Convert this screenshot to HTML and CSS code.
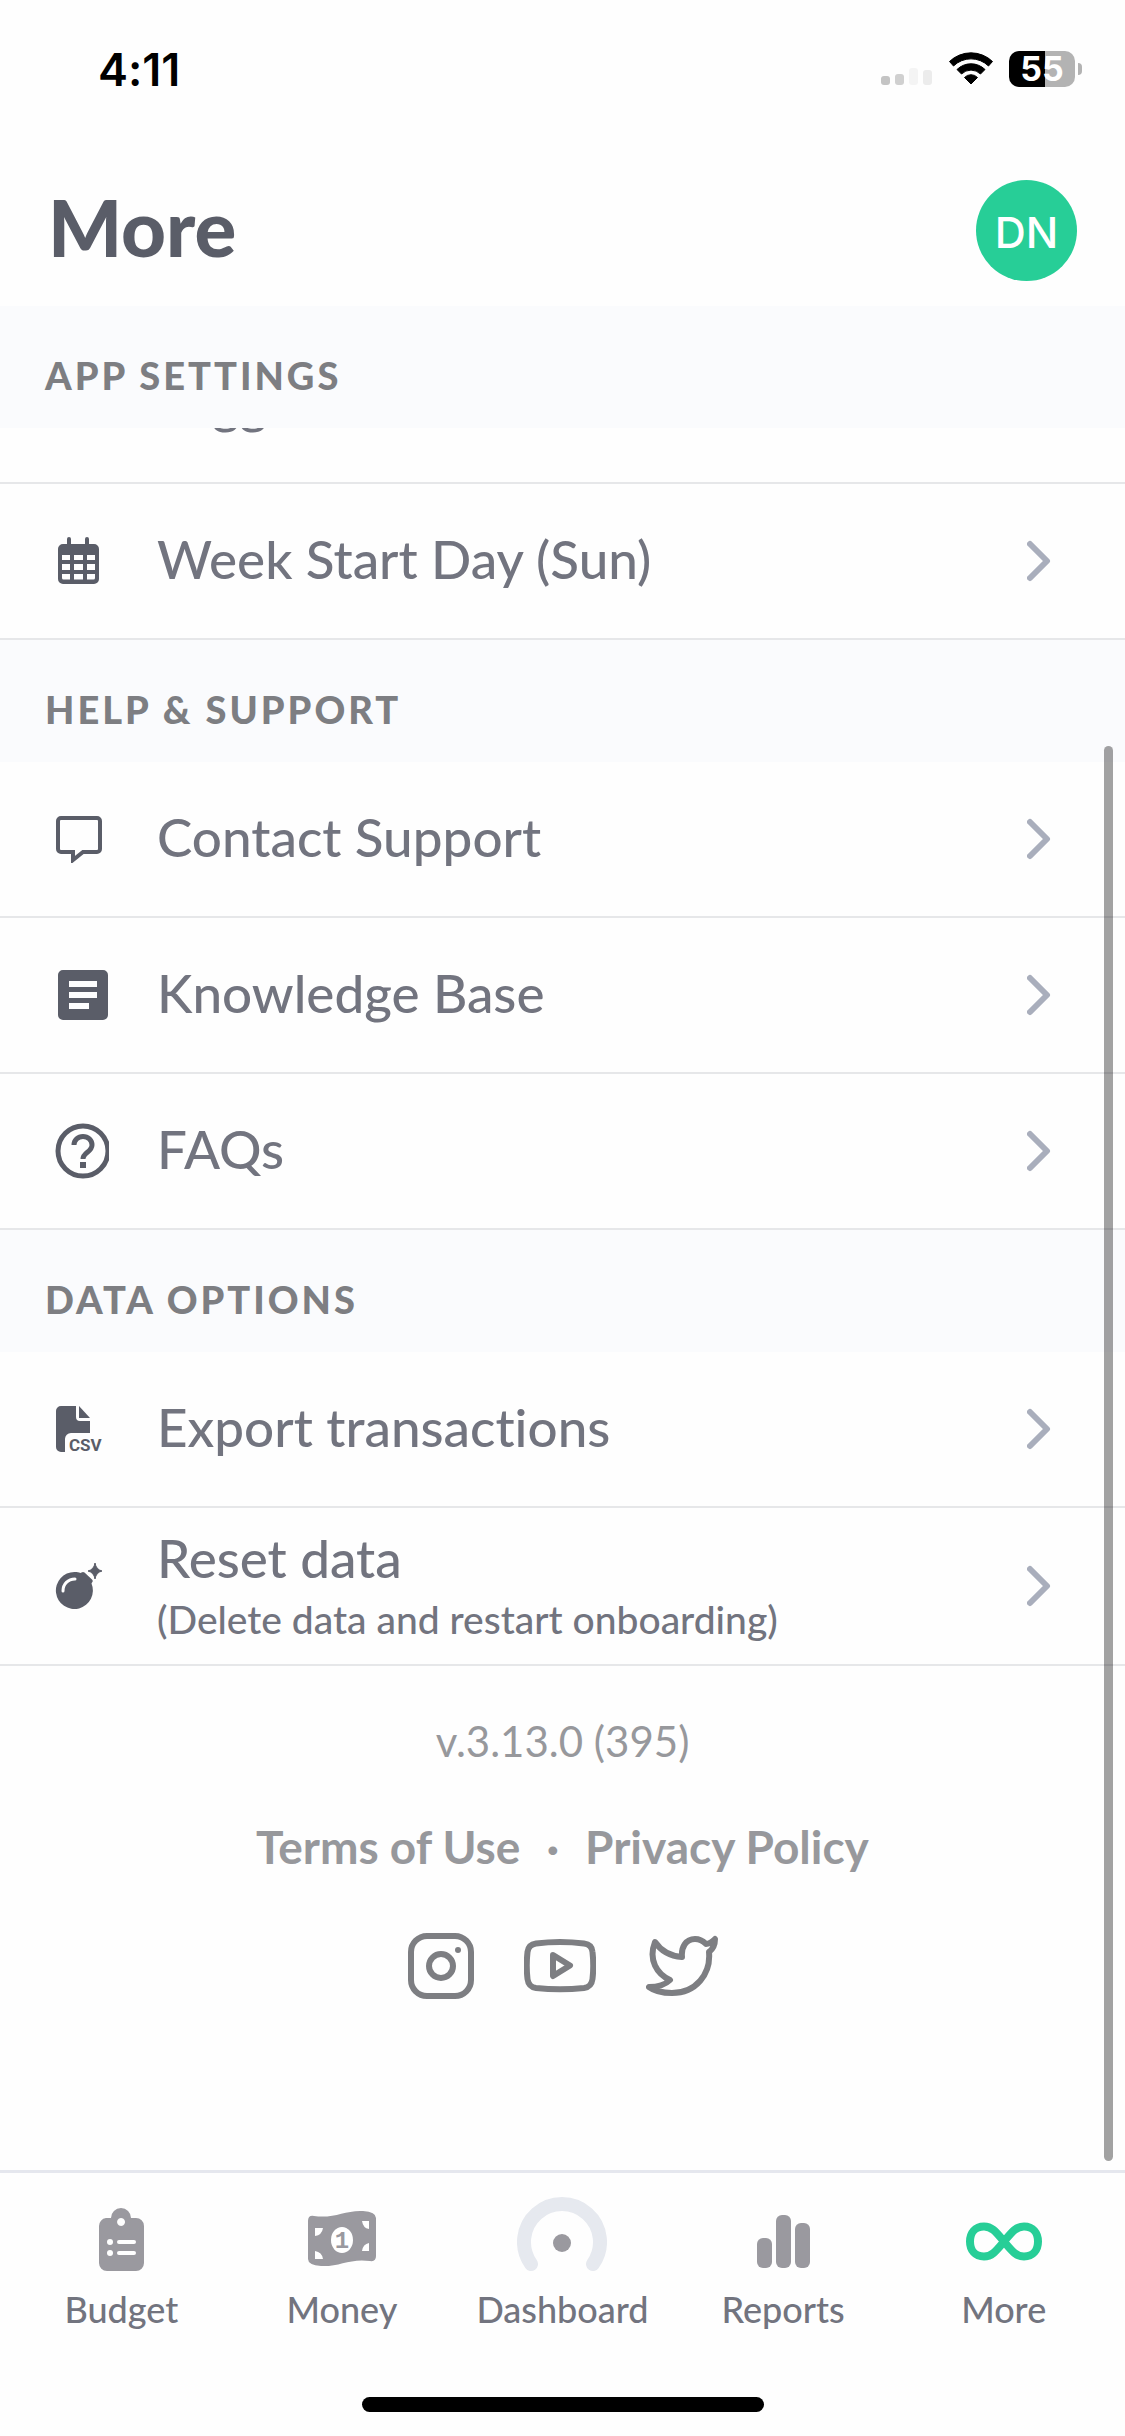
FILE: index.html
```html
<!DOCTYPE html>
<html lang="en">
<head>
  <meta charset="UTF-8">
  <meta name="viewport" content="width=device-width, initial-scale=1.0">
  <title>More</title>
  <link rel="stylesheet" href="styles.css">
</head>
<body>
  <div class="status-bar">
    <span class="time">4:11</span>
    <div class="status-icons">
      <svg class="signal" width="52" height="20" viewBox="0 0 52 20">
        <rect x="0" y="9" width="9" height="9" rx="3" fill="#c4c4c4"/>
        <rect x="14" y="7" width="9" height="11" rx="3" fill="#d0d0d0"/>
        <rect x="28" y="1" width="9" height="17" rx="3" fill="#f4f4f4"/>
        <rect x="42" y="3" width="9" height="15" rx="3" fill="#ececec"/>
      </svg>
      <svg width="46" height="34" viewBox="0 0 46 34">
        <path d="M1.500 9.500A31 31 0 0 1 44.500 9.500L40.500 14A25 25 0 0 0 5.500 14Z" stroke="#000" stroke-linejoin="round"/>
        <path d="M9 17.500A20 20 0 0 1 37 17.500L32.500 22A13.500 13.500 0 0 0 13.500 22Z" stroke="#000" stroke-linejoin="round"/>
        <path d="M16.500 25.500A9 9 0 0 1 29.500 25.500L23 32Z" stroke="#000" stroke-linejoin="round"/>
      </svg>
      <div class="battery"><span>55</span></div>
    </div>
  </div>

  <header class="header">
    <h1>More</h1>
    <button type="button" class="avatar">DN</button>
  </header>

  <main class="content">
    <h2 class="section-title">App Settings</h2>
    <div class="row-clip">
      <a href="#" class="row"><span class="icon"></span><span class="label">Toggle</span></a>
    </div>
    <a href="#" class="row">
      <span class="icon">
        <svg width="48" height="48" viewBox="0 0 48 48">
          <path fill-rule="evenodd" d="M12 2a2 2 0 0 1 4 0v5h14V2a2 2 0 0 1 4 0v5h5a5 5 0 0 1 5 5v30a5 5 0 0 1-5 5H8a5 5 0 0 1-5-5V12a5 5 0 0 1 5-5h4zM7 18v5h8v-5zM19 18v5h9v-5zM32 18v5h8v-5zM7 27v6h8v-6zM19 27v6h9v-6zM32 27v6h8v-6zM7 37v4q0 1.500 1.500 1.500H15V37zM19 37v5.500h9V37zM32 37v5.500h6.500q1.500 0 1.500-1.500v-4z"/>
        </svg>
      </span>
      <span class="label">Week Start Day (Sun)</span>
      <svg class="chevron" width="24" height="42" viewBox="0 0 24 42"><path d="M3 4l17 17L3 38"/></svg>
    </a>

    <h2 class="section-title">Help &amp; Support</h2>
    <a href="#" class="row">
      <span class="icon">
        <svg width="48" height="48" viewBox="0 0 48 48">
          <path class="line" stroke-width="4" d="M6 3h36a3 3 0 0 1 3 3v28a3 3 0 0 1-3 3H28l-10 8v-8H6a3 3 0 0 1-3-3V6a3 3 0 0 1 3-3z"/>
        </svg>
      </span>
      <span class="label">Contact Support</span>
      <svg class="chevron" width="24" height="42" viewBox="0 0 24 42"><path d="M3 4l17 17L3 38"/></svg>
    </a>
    <a href="#" class="row">
      <span class="icon">
        <svg width="54" height="54" viewBox="0 0 54 54">
          <path fill-rule="evenodd" d="M8 2h40a5 5 0 0 1 5 5v40a5 5 0 0 1-5 5H8a5 5 0 0 1-5-5V7a5 5 0 0 1 5-5zM14 13v6h28v-6zM14 24v6h28v-6zM14 35v6h20v-6z"/>
        </svg>
      </span>
      <span class="label">Knowledge Base</span>
      <svg class="chevron" width="24" height="42" viewBox="0 0 24 42"><path d="M3 4l17 17L3 38"/></svg>
    </a>
    <a href="#" class="row">
      <span class="icon">
        <svg width="54" height="56" viewBox="0 0 54 56">
          <circle class="line" stroke-width="5" cx="28" cy="28" r="25"/>
          <path class="line" stroke-width="5" d="M19 22c0-5 4-8.500 9-8.500s9 3.500 9 8.500c0 7-9 7.500-9 14"/>
          <rect x="25" y="39" width="6" height="6"/>
        </svg>
      </span>
      <span class="label">FAQs</span>
      <svg class="chevron" width="24" height="42" viewBox="0 0 24 42"><path d="M3 4l17 17L3 38"/></svg>
    </a>

    <h2 class="section-title">Data Options</h2>
    <a href="#" class="row">
      <span class="icon">
        <svg width="54" height="48" viewBox="0 0 54 48">
          <path d="M6 1h15v11a4 4 0 0 0 4 4h10v12H16a6 6 0 0 0-6 6v13H6a5 5 0 0 1-5-5V6a5 5 0 0 1 5-5z"/>
          <path d="M24 1l11 12H24z"/>
          <text class="csv" x="14" y="46">CSV</text>
        </svg>
      </span>
      <span class="label">Export transactions</span>
      <svg class="chevron" width="24" height="42" viewBox="0 0 24 42"><path d="M3 4l17 17L3 38"/></svg>
    </a>
    <a href="#" class="row row-tall">
      <span class="icon">
        <svg width="48" height="48" viewBox="0 0 48 48">
          <path d="M19.500 10c3 0 4 .3 6 1l1-.5q1.500-1 3 0l7.500 7q1.500 1.500 0 3l-.5 1A18.500 18.500 0 1 1 19.500 10z"/>
          <path d="M40 1q1 6.500 7 8-6 1.500-7 8-1-6.500-7-8 6-1.500 7-8z" stroke="#5a5d68" stroke-width="1" stroke-linejoin="round"/>
          <path d="M8 29c0-7 5-12 12-12" fill="none" stroke="#fff" stroke-width="3" stroke-linecap="round"/>
        </svg>
      </span>
      <span class="label">Reset data<small>(Delete data and restart onboarding)</small></span>
      <svg class="chevron" width="24" height="42" viewBox="0 0 24 42"><path d="M3 4l17 17L3 38"/></svg>
    </a>

    <footer class="footer">
      <p class="version">v.3.13.0 (395)</p>
      <p class="legal"><a href="#">Terms of Use</a><span>·</span><a href="#">Privacy Policy</a></p>
      <div class="social">
        <a href="#" aria-label="Instagram">
          <svg width="66" height="66" viewBox="0 0 66 66">
            <rect x="3" y="3" width="60" height="60" rx="16"/>
            <circle cx="33" cy="33" r="12"/>
            <circle class="dot" cx="50" cy="17" r="3"/>
          </svg>
        </a>
        <a href="#" aria-label="YouTube">
          <svg width="72" height="66" viewBox="0 0 72 66">
            <path d="M12 10.500Q36 7.500 60 10.500Q68 11.500 68.500 19Q70 33 68.500 46Q67.500 54 60 55Q36 57.500 12 55Q4.500 54 3.500 46Q2 33 3.500 19Q4.500 11.500 12 10.500z"/>
            <path d="M29 22l17 10.500L29 43z"/>
          </svg>
        </a>
        <a href="#" aria-label="Twitter">
          <svg width="72" height="66" viewBox="0 0 72 66">
            <path d="M9 9C15 18 24 23 36 24C35 14 40 6 49 6C54 6 57 8 60 11C64 11 67 8 69 6C69 12 67 16 63 19C65 41 50 60 26 60C15 60 7 57 3 54C12 54 20 51 24 47C11 41 2 27 9 9z"/>
          </svg>
        </a>
      </div>
    </footer>
    <div class="scrollbar"></div>
  </main>

  <nav class="tab-bar">
    <a href="#">
      <svg width="90" height="76" viewBox="0 0 90 76">
        <path fill-rule="evenodd" d="M30 21h5a10 10 0 0 1 20 0h5a8 8 0 0 1 8 8v37a8 8 0 0 1-8 8H31a8 8 0 0 1-8-8V29a8 8 0 0 1 7-8zM45 21a4 4 0 1 0 .1 0z"/>
        <g fill="#fff"><circle cx="34" cy="45" r="3"/><circle cx="34" cy="56" r="3"/><rect x="41" y="43" width="19" height="4" rx="2"/><rect x="41" y="54" width="19" height="4" rx="2"/></g>
      </svg>
      Budget
    </a>
    <a href="#">
      <svg width="90" height="76" viewBox="0 0 90 76">
        <path d="M11 24q0-6 6-5c20 3 31-6 49-5q13 1 13 7v38q0 6-6 5c-20-3-31 6-49 5q-13-1-13-7z"/>
        <g fill="#fff"><ellipse cx="45" cy="43" rx="11" ry="13"/><path d="M18 31h8q-1 7-8 8zM18 62v-8q7 1 8 8zM72 24v8q-6-1-7-8zM72 54h-7q1-7 7-8z"/></g>
        <text class="bill" x="45" y="51" text-anchor="middle">1</text>
      </svg>
      Money
    </a>
    <a href="#">
      <svg width="90" height="76" viewBox="0 0 90 76">
        <path d="M14 67A38 38 0 1 1 76 67" fill="none" stroke="#e6e9ef" stroke-width="14" stroke-linecap="round"/>
        <circle cx="45" cy="46" r="9"/>
      </svg>
      Dashboard
    </a>
    <a href="#">
      <svg width="90" height="76" viewBox="0 0 90 76">
        <rect x="19" y="41" width="15" height="30" rx="6"/><rect x="38" y="18" width="15" height="53" rx="6"/><rect x="57" y="26" width="15" height="45" rx="6"/>
      </svg>
      Reports
    </a>
    <a href="#">
      <svg width="90" height="76" viewBox="0 0 90 76">
        <path d="M45 44.500C37 35 33 29.500 25 29.500C16 29.500 11 36 11 44.500S16 59.500 25 59.500C33 59.500 37 54 45 44.500S57 29.500 65 29.500C74 29.500 79 36 79 44.500S74 59.500 65 59.500C57 59.500 53 54 45 44.500z" fill="none" stroke="#27ce97" stroke-width="8"/>
      </svg>
      More
    </a>
  </nav>
  <div class="home-indicator"></div>
</body>
</html>
```
FILE: styles.css
```css
* {
  box-sizing: border-box;
}

body {
  margin: 0;
  min-height: 100vh;
  display: flex;
  flex-direction: column;
  background-color: #fefefe;
  color: #72747f;
  font-family: Lato, sans-serif;
  font-variant-ligatures: none;
}

a {
  color: inherit;
  text-decoration: none;
}

.status-bar {
  display: flex;
  justify-content: space-between;
  align-items: center;
  height: 138px;
  padding: 0 50px 0 98px;
  color: #000;
  font-family: Inter, sans-serif;
}

.time {
  font-size: 45px;
  font-weight: 600;
}

.status-icons {
  display: flex;
  align-items: center;
  gap: 15px;
}

.signal {
  align-self: flex-end;
}

.battery {
  position: relative;
  width: 66px;
  height: 36px;
  border-radius: 10px;
  background: linear-gradient(to right, #000 54%, #b3b3b3 54%);
  color: #fff;
  font-size: 34px;
  font-weight: 700;
  line-height: 36px;
  text-align: center;
}

.battery::after {
  content: "";
  position: absolute;
  right: -7px;
  top: 12px;
  width: 4px;
  height: 12px;
  border-radius: 0 4px 4px 0;
  background-color: #b3b3b3;
}

.header {
  display: flex;
  justify-content: space-between;
  align-items: center;
  height: 168px;
  padding: 16px 48px 0 48px;
}

h1 {
  margin: 0;
  padding-bottom: 6px;
  color: #5a5d68;
  font-size: 78px;
  font-weight: 900;
  line-height: 90px;
}

.avatar {
  width: 101px;
  height: 101px;
  padding: 4px 0 0;
  border: 0;
  border-radius: 50%;
  background-color: #27ce97;
  color: #fff;
  font-family: Inter, sans-serif;
  font-size: 43px;
  font-weight: 500;
}

.content {
  position: relative;
  flex: 1;
}

.section-title {
  height: 122px;
  margin: 0;
  padding: 19px 45px 0;
  background-color: #fafbfd;
  color: #7d7e82;
  font-size: 38px;
  font-weight: 900;
  letter-spacing: 3px;
  line-height: 100px;
  text-transform: uppercase;
}

/* row scrolled partly under the first section title */
.row-clip {
  display: flex;
  flex-direction: column;
  justify-content: flex-end;
  height: 56px;
  overflow: hidden;
}

.row {
  display: flex;
  align-items: center;
  flex-shrink: 0;
  min-height: 156px;
  padding: 0 74px 0 55px;
  border-bottom: 2px solid #e6e7e9;
}

.row-tall {
  min-height: 158px;
}

.icon {
  width: 102px;
  display: flex;
  fill: #5a5d68;
}

.line {
  fill: none;
  stroke: #5a5d68;
}

.csv {
  font-family: Roboto, sans-serif;
  font-size: 17px;
  font-weight: 700;
}

.label {
  flex: 1;
  padding-bottom: 4px;
  font-size: 53px;
  font-weight: 500;
  line-height: 62px;
}

.row-tall .label {
  padding: 4px 0 0;
}

.label small {
  display: block;
  font-size: 39px;
  line-height: 60px;
}

.chevron path {
  fill: none;
  stroke: #a9aebc;
  stroke-width: 6;
  stroke-linecap: round;
  stroke-linejoin: round;
}

.footer {
  padding-top: 43px;
  color: #97989c;
  text-align: center;
}

.version {
  margin: 0;
  font-size: 42px;
  line-height: 64px;
}

.legal {
  display: flex;
  justify-content: center;
  gap: 26px;
  margin: 40px 0 52px;
  font-size: 46px;
  font-weight: 700;
  line-height: 68px;
}

.social {
  display: flex;
  justify-content: center;
  gap: 50px;
}

.social svg {
  display: block;
  fill: none;
  stroke: #7d7e82;
  stroke-width: 6;
  stroke-linejoin: round;
}

.social .dot {
  fill: #7d7e82;
  stroke: none;
}

.scrollbar {
  position: absolute;
  top: 440px;
  right: 12px;
  bottom: 9px;
  width: 9px;
  border-radius: 5px;
  background-color: rgba(0, 0, 0, 0.36);
}

.tab-bar {
  display: flex;
  padding: 24px 11px 0;
  border-top: 3px solid #e5e7ee;
}

.tab-bar a {
  flex: 1;
  display: flex;
  flex-direction: column;
  align-items: center;
  gap: 12px;
  font-size: 36px;
  font-weight: 500;
  line-height: 48px;
}

.tab-bar svg {
  fill: #9a999f;
}

.bill {
  font-family: "Liberation Mono", monospace;
  font-size: 24px;
  font-weight: 700;
}

.home-indicator {
  width: 402px;
  height: 15px;
  margin: 64px auto 24px;
  border-radius: 8px;
  background-color: #000;
}
```
